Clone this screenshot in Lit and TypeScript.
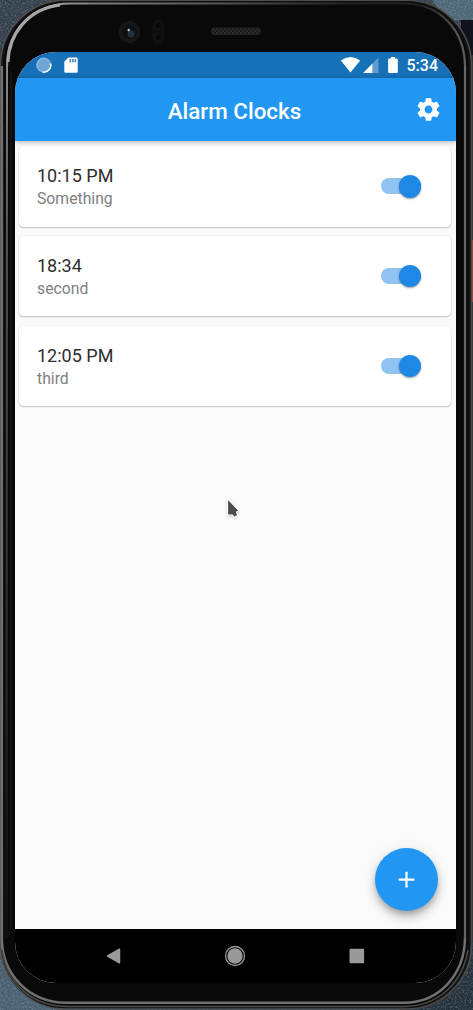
import { LitElement, html, css } from "lit";
import { customElement, property, state } from "lit/decorators.js";

interface Alarm { time: string; label: string; on: boolean }

@customElement("alarm-card")
class AlarmCard extends LitElement {
  @property({ attribute: false }) alarm!: Alarm;

  static styles = css`
    :host { display: block; }
    .card {
      box-sizing: border-box; height: 80.500px; padding: 0 26px 0 18px;
      display: flex; align-items: center; justify-content: space-between;
      background: #fff; border-radius: 4.5px;
      box-shadow: 0 1px 1.5px rgba(0,0,0,.22), 0 0 1.5px rgba(0,0,0,.1);
    }
    .text { display: flex; flex-direction: column; padding-top: 1.500px; }
    .time { font-size: 18px; line-height: 24px; color: #2e2e2e; }
    .label { font-size: 15.75px; line-height: 22px; color: #808080; }
    .switch {
      display: flex; align-items: center; justify-content: flex-end;
      width: 40px; height: 16px; margin-right: 4px; border-radius: 8px; background: #8fc3f2;
    }
    .thumb {
      width: 22.5px; height: 22.5px; flex: none; border-radius: 50%; background: #1e88e5;
      box-shadow: 0 1px 2px rgba(0,0,0,.4);
    }
  `;

  render() {
    return html`<div class="card">
      <div class="text"><span class="time">${this.alarm.time}</span><span class="label">${this.alarm.label}</span></div>
      <div class="switch"><div class="thumb"></div></div>
    </div>`;
  }
}

@customElement("device-frame")
class DeviceFrame extends LitElement {
  static styles = css`
    :host { display: block; width: 473px; height: 1010px; }
    .body { display: block; }
  `;

  render() {
    return html`<svg class="body" width="473" height="1010" viewBox="0 0 473 1010">
      <defs>
        <linearGradient id="desk" x1="0" y1="0" x2="0" y2="1">
          <stop offset="0" stop-color="#34414c"/><stop offset=".5" stop-color="#282e34"/><stop offset="1" stop-color="#4b6275"/>
        </linearGradient>
        <linearGradient id="top-rim" gradientUnits="userSpaceOnUse" x1="6" y1="0" x2="466" y2="0">
          <stop offset="0" stop-color="#8c8c8c"/><stop offset=".06" stop-color="#a8a8a8"/><stop offset=".2" stop-color="#7c7c7c"/><stop offset=".42" stop-color="#5c5c5c"/><stop offset=".75" stop-color="#222"/><stop offset=".9" stop-color="#202020"/><stop offset="1" stop-color="#606060"/>
        </linearGradient>
        <linearGradient id="left-rim" gradientUnits="userSpaceOnUse" x1="0" y1="60" x2="0" y2="940">
          <stop offset="0" stop-color="#8c8c8c"/><stop offset=".2" stop-color="#555"/><stop offset=".6" stop-color="#333"/><stop offset="1" stop-color="#111"/>
        </linearGradient>
        <pattern id="mesh" width="4" height="4" patternUnits="userSpaceOnUse">
          <rect width="4" height="4" fill="#1c1c1c"/><circle cx="1" cy="1" r=".8" fill="#383838"/><circle cx="3" cy="3" r=".8" fill="#383838"/>
        </pattern>
        <filter id="grain" x="0" y="0" width="1" height="1">
          <feTurbulence type="fractalNoise" baseFrequency=".6" numOctaves="2"/>
          <feColorMatrix values="0 0 0 0 .45  0 0 0 0 .55  0 0 0 0 .63  .8 0 0 0 -.36"/>
        </filter>
      </defs>
      <rect width="473" height="1010" fill="url(#desk)"/>
      <path d="M400 940H473V1010H400Z" fill="#25323b"/>
      <path d="M432 0H473V20H446Z" fill="#4e6777"/>
      <rect width="473" height="1010" filter="url(#grain)"/>
      <rect x="461" y="20" width="12" height="35" fill="#10131c"/>
      <rect x="466" y="55" width="7" height="885" fill="#303334"/>
      <rect x="471.500" y="240" width="2" height="62" fill="#a84640"/>
      <rect x=".5" y=".3" width="471" height="1008.700" rx="65" fill="#161616" stroke="#4d4d4d" stroke-width="1.500"/>
      <rect x="3.500" y="2" width="465" height="1004" rx="62" fill="#090909" stroke="#111" stroke-width="1.500"/>
      <path d="M7 66C7 30 32 4 70 3.500H404C440 3.500 464.500 30 465 66" fill="none" stroke="url(#top-rim)" stroke-width="2.200"/>
      <path d="M8 62C9 34 28 9 60 5" fill="none" stroke="#a6a6a6" stroke-width="3"/>
      <path d="M7 66L6.500 938" fill="none" stroke="url(#left-rim)" stroke-width="2"/>
      <path d="M465 66V938" fill="none" stroke="#666" stroke-width="2.200"/>
      <path d="M1.800 66V938C2 974 28 1002 66 1002.800H404C440 1002.500 464.500 974 465 938" fill="none" stroke="#6f706f" stroke-width="2.500"/>
      <path d="M2 950C7 984 32 1006 68 1006.500H404C438 1006 462 984 468 950" fill="none" stroke="#484b48" stroke-width="1.500"/>
      <rect x="10.500" y="72" width="1.200" height="858" fill="#1c1c1e"/>
      <circle cx="129.500" cy="32" r="11" fill="#151718"/>
      <circle cx="129.500" cy="32" r="7" fill="#0c1012"/>
      <circle cx="131" cy="34" r="3.500" fill="#22333d"/>
      <circle cx="128.700" cy="30" r="1.200" fill="#c5cccc"/>
      <rect x="153" y="20.500" width="10.500" height="23" rx="5.200" fill="#0e0e0e" stroke="#151515"/>
      <circle cx="158.300" cy="25.500" r="3.500" fill="#070707" stroke="#171717"/>
      <circle cx="158.300" cy="37.500" r="3.500" fill="#070707" stroke="#171717"/>
      <rect x="211.500" y="28" width="49" height="6.500" rx="3" fill="url(#mesh)" stroke="#242424"/>
    </svg>`;
  }
}

@customElement("app-root")
class AppRoot extends LitElement {
  @state() alarms: Alarm[] = [
    { time: "10:15 PM", label: "Something", on: true },
    { time: "18:34", label: "second", on: true },
    { time: "12:05 PM", label: "third", on: true },
  ];

  static styles = css`
    :host { display: block; width: 473px; height: 1010px; overflow: hidden; font-family: Roboto, "Liberation Sans", sans-serif; }
    .device { display: grid; width: 473px; height: 1010px; }
    .device > * { grid-area: 1 / 1; }
    .screen {
      z-index: 1; margin: 52px 0 0 15px; width: 441px; height: 931px; overflow: hidden;
      display: flex; flex-direction: column; border-radius: 41px; background: #fafafa;
    }
    svg { display: block; flex: none; }
    .status {
      box-sizing: border-box; height: 26px; flex: none; display: flex; align-items: center; justify-content: space-between;
      padding: 0 18px 0 20px; background: #1771b8; color: #fff; font-size: 16px; font-weight: 500;
    }
    .group { display: flex; align-items: center; }
    .clock { margin-left: 7px; line-height: 26px; padding-top: 2px; }
    .bar {
      z-index: 1; height: 63px; flex: none; display: grid; grid-template-columns: 62px 1fr 64px; align-items: center;
      background: #2196f3; color: #fff; box-shadow: 0 1px 5px rgba(0,0,0,.3);
    }
    .title { grid-column: 2; margin: 0; text-align: center; font-size: 22.4px; font-weight: 500; line-height: 28px; padding-top: 2px; }
    .gear { margin: 0 0 0 22.500px; }
    .main { position: relative; flex: 1; padding: 5px 5px 0 4px; display: flex; flex-direction: column; gap: 9.300px; }
    .fab {
      position: absolute; right: 18.500px; bottom: 18.500px; width: 63px; height: 63px; border-radius: 50%;
      display: flex; align-items: center; justify-content: center; background: #2196f3;
      box-shadow: 0 4px 6px -1px rgba(0,0,0,.25), 0 7px 11px rgba(0,0,0,.14), 0 1px 18px rgba(0,0,0,.06);
    }
    .cursor { position: absolute; left: 211px; top: 355px; filter: drop-shadow(0 1px 1px rgba(0,0,0,.2)); }
    .nav { height: 54px; flex: none; display: flex; align-items: center; justify-content: space-between; padding: 0 91px; background: #000; }
    .ticks { fill: none; stroke: #9dc0e0; stroke-width: 1.500; stroke-dasharray: 1 1; }
  `;

  render() {
    return html`<div class="device">
      <device-frame></device-frame>
      <div class="screen">
        <div class="status">
          <div class="group">
            <svg width="50" height="18" viewBox="0 0 50 18">
              <circle cx="8.700" cy="9" r="7.500" fill="#6ea6d6"/>
              <circle class="ticks" cx="8.700" cy="9" r="6.500"/>
              <path d="M15.800 7.500A7.300 7.300 0 0 1 7.500 16.200" fill="none" stroke="#fff" stroke-width="1.300"/>
              <path d="M33.500 1.400H41.200Q42.700 1.400 42.700 2.900V15.300Q42.700 16.800 41.200 16.800H30.800Q29.300 16.800 29.300 15.300V5.600Z" fill="#fff"/>
              <path d="M34.500 3h1.600v3.200h-1.600zM37 3h1.600v3.200H37zM39.500 3h1.600v3.200h-1.600z" fill="#3f87c3"/>
            </svg>
          </div>
          <div class="group">
            <svg width="60" height="18" viewBox="0 0 60 18">
              <path d="M.8 4.600Q10.500-2.400 20.200 4.600L10.500 16.500Z" fill="#fff"/>
              <path d="M38.400 1.500V17H23.200Z" fill="#5e9ed2"/>
              <path d="M32.300 7.700V17H23.200Z" fill="#fff"/>
              <path d="M51 1h4v1.600h1.700q1.100 0 1.100 1.100V15.900q0 1.100-1.100 1.100H49.200q-1.100 0-1.100-1.100V3.700q0-1.100 1.100-1.100H51z" fill="#fff"/>
            </svg>
            <span class="clock">5:34</span>
          </div>
        </div>
        <header class="bar">
          <h1 class="title">Alarm Clocks</h1>
          <svg class="gear" width="27" height="27" viewBox="0 0 24 24" fill="#fff">
            <path d="M19.430 12.980c.04-.32.07-.64.07-.98s-.03-.66-.07-.98l2.110-1.650c.19-.15.24-.42.12-.64l-2-3.460c-.12-.22-.39-.3-.61-.22l-2.490 1c-.52-.4-1.080-.73-1.690-.98l-.38-2.650C14.460 2.180 14.250 2 14 2h-4c-.25 0-.46.18-.49.42l-.38 2.650c-.61.25-1.170.59-1.690.98l-2.490-1c-.23-.09-.49 0-.61.22l-2 3.460c-.13.22-.07.49.12.64l2.110 1.650c-.04.32-.07.65-.07.98s.03.66.07.98l-2.110 1.650c-.19.15-.24.42-.12.64l2 3.460c.12.22.39.3.61.22l2.490-1c.52.4 1.080.73 1.690.98l.38 2.650c.03.24.24.42.49.42h4c.25 0 .46-.18.49-.42l.38-2.650c.61-.25 1.170-.59 1.690-.98l2.490 1c.23.09.49 0 .61-.22l2-3.460c.12-.22.07-.49-.12-.64l-2.110-1.650zM12 15.500c-1.930 0-3.500-1.570-3.500-3.500s1.570-3.500 3.500-3.500 3.500 1.570 3.500 3.500-1.570 3.500-3.500 3.500z"/>
          </svg>
        </header>
        <main class="main">
          ${this.alarms.map(a => html`<alarm-card .alarm=${a}></alarm-card>`)}
          <svg class="cursor" width="16" height="24" viewBox="0 0 16 24">
            <path d="M1.500 2.500L13 14.500L10.500 16.300L11.800 19.300L8.400 21.500L6.400 19H1.500Z" fill="#4c4c4c" stroke="#fff" stroke-width="1.200"/>
          </svg>
          <div class="fab"><svg width="27" height="27" viewBox="0 0 24 24" fill="#fff"><path d="M19 13h-6v6h-2v-6H5v-2h6V5h2v6h6z"/></svg></div>
        </main>
        <nav class="nav">
          <svg width="15" height="16" viewBox="0 0 15 16"><path d="M1.500 8L13.500 1.200V14.800Z" fill="#999" stroke="#999" stroke-width="1.500" stroke-linejoin="round"/></svg>
          <svg width="22" height="22" viewBox="0 0 22 22"><circle cx="11" cy="11" r="9.500" fill="none" stroke="#999" stroke-width="1.300"/><circle cx="11" cy="11" r="7.700" fill="#999"/></svg>
          <svg width="16" height="16" viewBox="0 0 16 16"><rect x=".5" y=".7" width="14.600" height="14.600" rx="1" fill="#999"/></svg>
        </nav>
      </div>
    </div>`;
  }
}
